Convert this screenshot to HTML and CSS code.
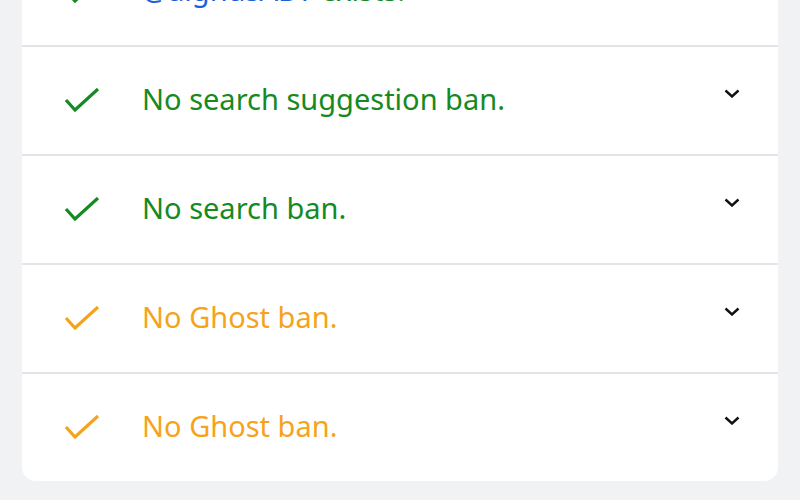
FILE: index.html
```html
<!DOCTYPE html>
<html lang="en">
  <head>
    <meta charset="UTF-8" />
    <meta name="viewport" content="width=device-width, initial-scale=1.0" />
    <title>Shadowban check</title>
    <link rel="stylesheet" href="styles.css">
  </head>
  <body>
    <main class="card">
      <!-- result rows -->
      <div class="row ok">
        <svg class="check" viewBox="0 0 36 26"><path d="M2 12 L11 22 L34 1" /></svg>
        <span class="label"><span class="user">@aignusABT</span> exists.</span>
        <svg class="chevron" viewBox="0 0 16 9"><path d="M1.5 1.5 L8 7.5 L14.5 1.5" /></svg>
      </div>
      <div class="row ok">
        <svg class="check" viewBox="0 0 36 26"><path d="M2 12 L11 22 L34 1" /></svg>
        <span class="label">No search suggestion ban.</span>
        <svg class="chevron" viewBox="0 0 16 9"><path d="M1.5 1.5 L8 7.5 L14.5 1.5" /></svg>
      </div>
      <div class="row ok">
        <svg class="check" viewBox="0 0 36 26"><path d="M2 12 L11 22 L34 1" /></svg>
        <span class="label">No search ban.</span>
        <svg class="chevron" viewBox="0 0 16 9"><path d="M1.5 1.5 L8 7.5 L14.5 1.5" /></svg>
      </div>
      <div class="row warn">
        <svg class="check" viewBox="0 0 36 26"><path d="M2 12 L11 22 L34 1" /></svg>
        <span class="label">No Ghost ban.</span>
        <svg class="chevron" viewBox="0 0 16 9"><path d="M1.5 1.5 L8 7.5 L14.5 1.5" /></svg>
      </div>
      <div class="row warn">
        <svg class="check" viewBox="0 0 36 26"><path d="M2 12 L11 22 L34 1" /></svg>
        <span class="label">No Ghost ban.</span>
        <svg class="chevron" viewBox="0 0 16 9"><path d="M1.5 1.5 L8 7.5 L14.5 1.5" /></svg>
      </div>
    </main>
  </body>
</html>
```

FILE: styles.css
```css
body {
  margin: 0;
  padding: 0;
  background-color: #f1f2f4;
  font-family: "Noto Sans", "Open Sans", sans-serif;
  overflow: hidden;
}

.card {
  margin: -62px 22px 0;
  background-color: #fff;
  border-radius: 0 0 14px 14px;
}

.row {
  display: flex;
  align-items: center;
  height: 107px;
  padding: 0 38px 0 42px;
  border-bottom: 2px solid #e4e4e6;
}
.row:last-child {
  border-bottom: none;
}

.check {
  width: 36px;
  height: 26px;
  flex-shrink: 0;
  margin-right: 42px;
}
.check path {
  fill: none;
  stroke-width: 3.2;
  stroke-linecap: butt;
  stroke-linejoin: miter;
}

.label {
  flex: 1;
  font-size: 29px;
  margin-bottom: 4px;
}

.ok .check path {
  stroke: #168a22;
}
.ok .label {
  color: #168a22;
}
.warn .check path {
  stroke: #f6a31c;
}
.warn .label {
  color: #f6a31c;
}

.user {
  color: #1f5fd8;
}

.chevron {
  width: 16px;
  height: 9px;
  flex-shrink: 0;
  margin-bottom: 14px;
}
.chevron path {
  fill: none;
  stroke: #111;
  stroke-width: 2.4;
}
```
